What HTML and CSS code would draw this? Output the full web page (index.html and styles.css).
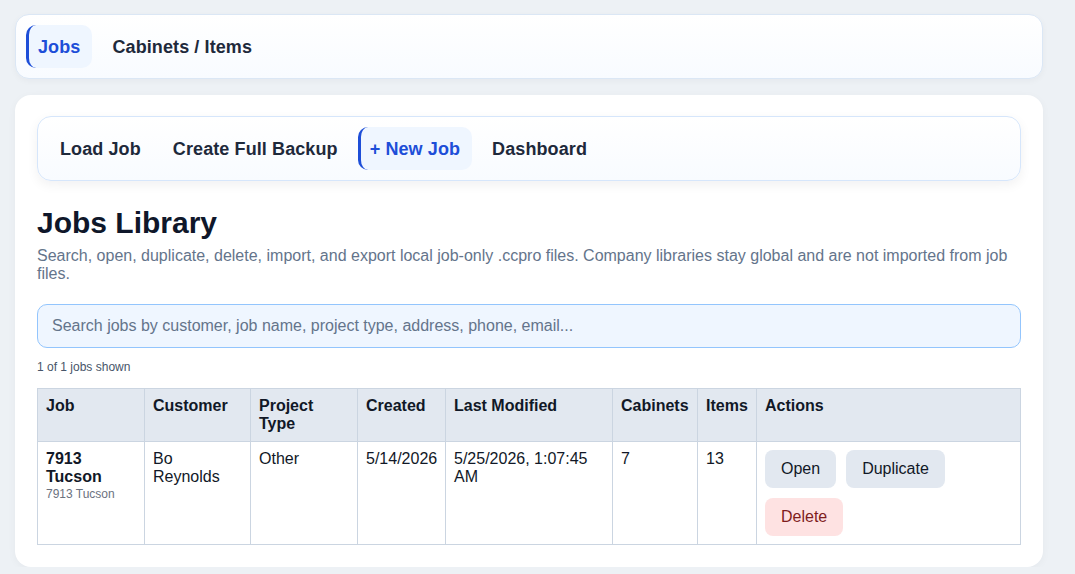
FILE: index.html
```html
<!DOCTYPE html>
<html>
<head>
<meta charset="utf-8"/>
<title>Jobs Library</title>
<link rel="stylesheet" href="styles.css">
</head>
<body>
<div class="page">

<nav class="topnav">
  <button class="tab active">Jobs</button>
  <button class="tab">Cabinets / Items</button>
</nav>

<main class="card">
  <div class="toolbar">
    <button class="tab">Load Job</button>
    <button class="tab">Create Full Backup</button>
    <button class="tab active">+ New Job</button>
    <button class="tab">Dashboard</button>
  </div>

  <h1>Jobs Library</h1>
  <p class="lead">Search, open, duplicate, delete, import, and export local job-only .ccpro files. Company libraries stay global and are not imported from job files.</p>

  <input class="search" type="text" placeholder="Search jobs by customer, job name, project type, address, phone, email...">

  <div class="count">1 of 1 jobs shown</div>

  <table class="jobs">
    <colgroup>
      <col class="c-job"><col class="c-cust"><col class="c-type"><col class="c-created">
      <col class="c-mod"><col class="c-cab"><col class="c-items"><col class="c-act">
    </colgroup>
    <thead>
      <tr>
        <th>Job</th>
        <th>Customer</th>
        <th>Project Type</th>
        <th>Created</th>
        <th>Last Modified</th>
        <th>Cabinets</th>
        <th>Items</th>
        <th>Actions</th>
      </tr>
    </thead>
    <tbody>
      <tr>
        <td><strong>7913 Tucson</strong><div class="sub">7913 Tucson</div></td>
        <td>Bo Reynolds</td>
        <td>Other</td>
        <td>5/14/2026</td>
        <td>5/25/2026, 1:07:45 AM</td>
        <td>7</td>
        <td>13</td>
        <td>
          <div class="actions">
            <button class="btn">Open</button>
            <button class="btn">Duplicate</button>
            <button class="btn danger">Delete</button>
          </div>
        </td>
      </tr>
    </tbody>
  </table>
</main>

</div>
</body>
</html>
```

FILE: styles.css
```css
body {
   margin: 0;
   background-color: #edf1f5;
   font-family: "Liberation Sans", Arial, sans-serif;
   color: #0f172a;
}

.page {
   width: 1028px;
   padding: 14px 0 0 15px;
}

button {
   font-family: inherit;
   cursor: pointer;
}

.topnav {
   display: flex;
   gap: 8px;
   padding: 10px;
   background: linear-gradient(180deg, #ffffff, #f8fbff);
   border: 1px solid #dbe7f5;
   border-radius: 14px;
   box-shadow: 0 2px 6px rgba(15, 23, 42, 0.04);
}

.tab {
   height: 43px;
   padding: 2px 12px 0;
   border: none;
   border-left: 3px solid transparent;
   border-radius: 10px;
   background: transparent;
   font-size: 18px;
   font-weight: bold;
   letter-spacing: 0.1px;
   color: #1e293b;
}

.tab.active {
   background-color: #eff6ff;
   border-left-color: #1d4ed8;
   color: #1d4ed8;
}

.topnav .tab, .toolbar .tab {
   padding-left: 9px;
}

.card {
   display: block;
   margin-top: 16px;
   padding: 21px 22px 22px;
   background-color: #ffffff;
   border-radius: 16px;
   box-shadow: 0 2px 8px rgba(15, 23, 42, 0.04);
}

.toolbar {
   display: flex;
   gap: 8px;
   padding: 10px;
   background: linear-gradient(180deg, #ffffff, #f8fbff);
   border: 1px solid #d6e6fb;
   border-radius: 14px;
   box-shadow: 0 4px 12px rgba(15, 23, 42, 0.06);
}

h1 {
   margin: 25px 0 7px;
   font-size: 30px;
   line-height: 34px;
   color: #0f172a;
}

.lead {
   margin: 0;
   font-size: 16px;
   line-height: 18px;
   color: #64748b;
}

.search {
   display: block;
   box-sizing: border-box;
   width: 100%;
   height: 44px;
   margin-top: 21px;
   padding: 0 14px;
   background-color: #eff6ff;
   border: 1px solid #93c5fd;
   border-radius: 10px;
   font-family: inherit;
   font-size: 16px;
   color: #0f172a;
   outline: none;
}

.search::placeholder {
   color: #64748b;
}

.count {
   margin: 12px 0 14px;
   font-size: 12px;
   line-height: 14px;
   color: #475569;
}

.jobs {
   width: 100%;
   table-layout: fixed;
   border-collapse: collapse;
   font-size: 16px;
   line-height: 18px;
}

.c-job { width: 107px; }
.c-cust { width: 106px; }
.c-type { width: 107px; }
.c-created { width: 88px; }
.c-mod { width: 167px; }
.c-cab { width: 85px; }
.c-items { width: 59px; }

.jobs th, .jobs td {
   padding: 8px;
   border: 1px solid #cbd5e1;
   text-align: left;
   vertical-align: top;
   color: #111827;
}

.jobs th {
   background-color: #e2e8f0;
   font-weight: bold;
}

.sub {
   font-size: 12px;
   line-height: 17px;
   color: #6b7280;
}

.actions {
   display: flex;
   flex-wrap: wrap;
   gap: 10px;
}

.btn {
   height: 38px;
   padding: 0 16px;
   border: none;
   border-radius: 8px;
   background-color: #e2e8f0;
   font-size: 16px;
   color: #111827;
}

.btn.danger {
   background-color: #fee2e2;
   color: #7f1d1d;
}
```
